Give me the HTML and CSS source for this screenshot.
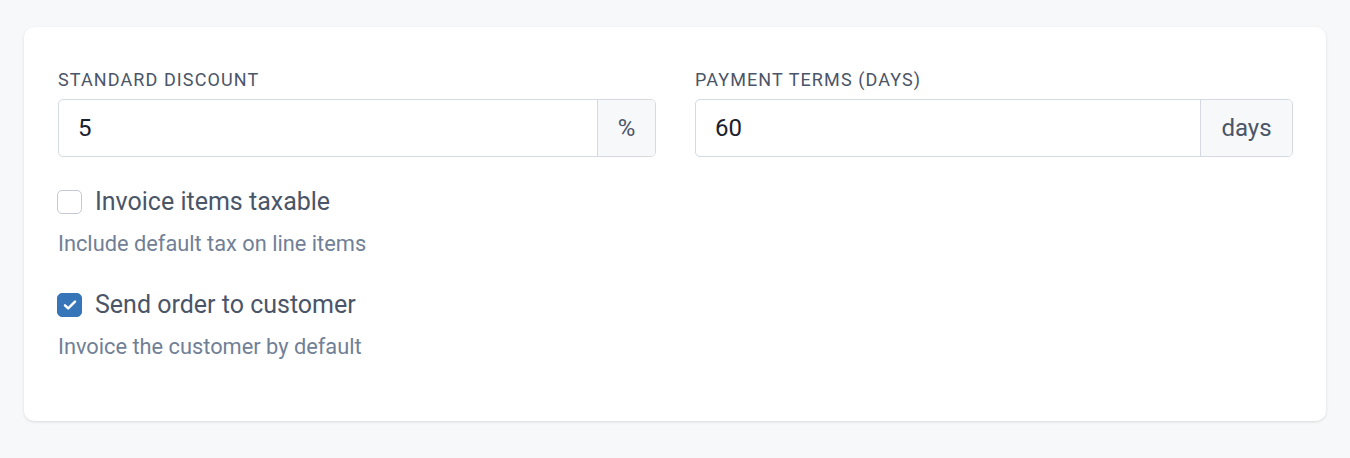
FILE: index.html
```html
<!DOCTYPE html>
<html lang="en">
<head>
    <meta charset="UTF-8">
    <meta name="viewport" content="width=device-width, initial-scale=1.0">
    <title>Customer defaults</title>
    <link rel="stylesheet" href="styles.css">
</head>
<body>
    <div class="card">
        <div class="fields">
            <div class="field">
                <label class="field-label">Standard discount</label>
                <div class="input-group">
                    <div class="input">5</div>
                    <div class="addon addon-pct">%</div>
                </div>
            </div>
            <div class="field">
                <label class="field-label">Payment terms (days)</label>
                <div class="input-group">
                    <div class="input">60</div>
                    <div class="addon addon-days">days</div>
                </div>
            </div>
        </div>

        <div class="option">
            <div class="check-row">
                <span class="checkbox"></span>
                <span class="check-label">Invoice items taxable</span>
            </div>
            <p class="hint">Include default tax on line items</p>
        </div>

        <div class="option">
            <div class="check-row">
                <span class="checkbox checked">
                    <svg viewBox="0 0 16 16" width="16" height="16"><path d="M3 8.3l3.2 3.1 6.8-6.8" fill="none" stroke="#fff" stroke-width="2.5" stroke-linecap="round" stroke-linejoin="round"/></svg>
                </span>
                <span class="check-label">Send order to customer</span>
            </div>
            <p class="hint">Invoice the customer by default</p>
        </div>
    </div>
</body>
</html>
```

FILE: styles.css
```css
body {
    margin: 0;
    padding: 27px 24px 37px;
    background-color: #f7f8fa;
    font-family: Roboto, 'Liberation Sans', sans-serif;
    color: #4a5568;
}
.card {
    background: #fff;
    border-radius: 10px;
    box-shadow: 0 1px 3px rgba(0, 0, 0, 0.12);
    padding: 42px 33px 40px 34px;
    box-sizing: border-box;
    height: 394px;
}
.fields {
    display: grid;
    grid-template-columns: 1fr 1fr;
    gap: 39px;
}
.field-label {
    display: block;
    font-size: 18px;
    line-height: 22px;
    letter-spacing: 1.1px;
    text-transform: uppercase;
    color: #4a5568;
    margin-bottom: 8px;
}
.input-group {
    display: flex;
    height: 58px;
    border: 1px solid #d5dae1;
    border-radius: 5px;
    box-sizing: border-box;
    overflow: hidden;
}
.input {
    flex: 1;
    display: flex;
    align-items: center;
    padding: 0 19px;
    font-size: 24px;
    color: #1a202c;
}
.addon {
    display: flex;
    align-items: center;
    justify-content: center;
    background: #f7f8fa;
    border-left: 1px solid #d5dae1;
    font-size: 24px;
    color: #4a5568;
}
.addon-pct {
    width: 57px;
}
.addon-days {
    width: 91px;
}
.option {
    margin-top: 29px;
}
.option + .option {
    margin-top: 31px;
}
.check-row {
    display: flex;
    align-items: center;
    gap: 13px;
}
.checkbox {
    width: 25px;
    height: 24px;
    border: 1.5px solid #c4cad3;
    border-radius: 5px;
    box-sizing: border-box;
    display: flex;
    align-items: center;
    justify-content: center;
    background: #fff;
    margin-left: -1px;
}
.checkbox.checked {
    background: #3575b8;
    border-color: #3575b8;
}
.check-label {
    font-size: 25px;
    line-height: 32px;
    color: #4a5568;
}
.hint {
    margin: 12px 0 0;
    font-size: 21.8px;
    line-height: 28px;
    color: #718096;
}
```
